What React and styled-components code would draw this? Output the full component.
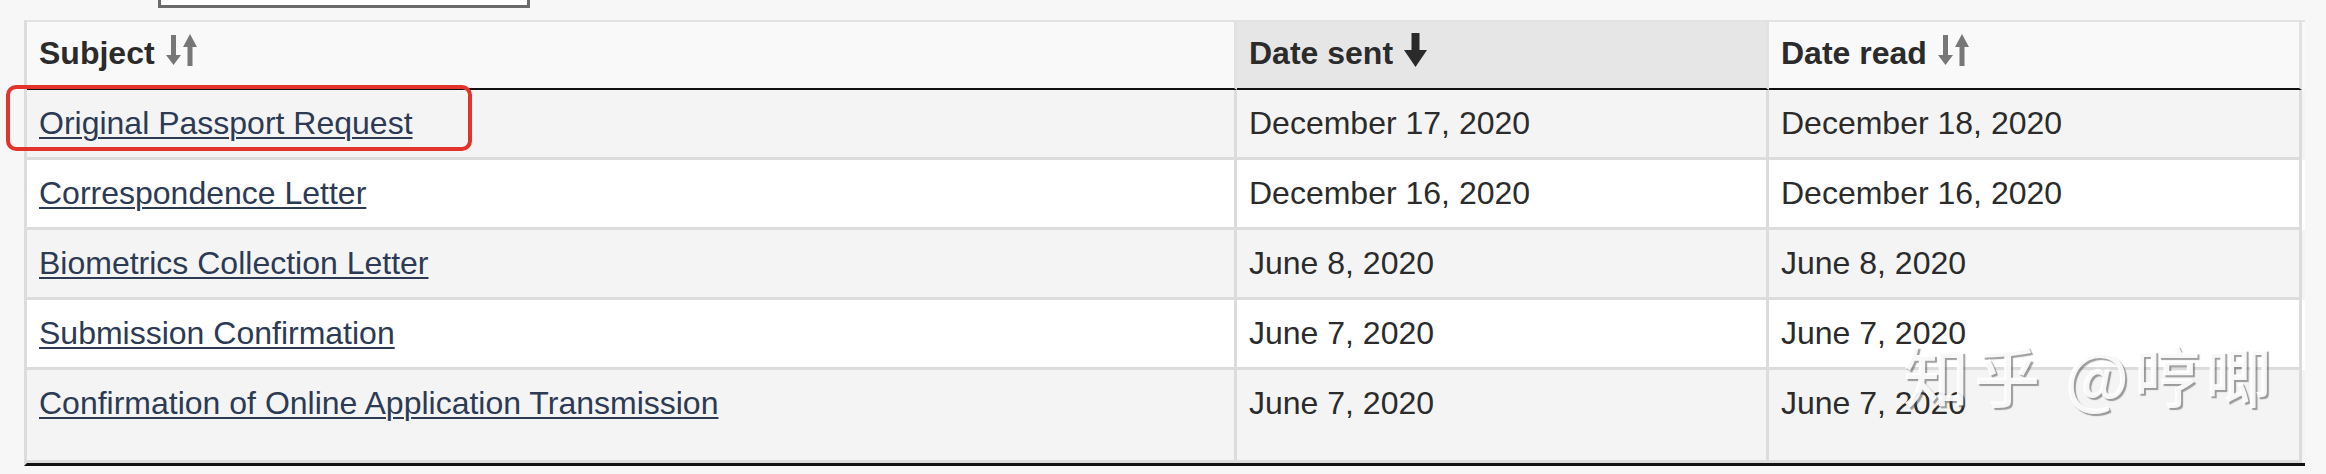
import React from 'react'
import styled, { createGlobalStyle } from 'styled-components'

const GlobalStyle = createGlobalStyle`
  html, body {
    margin: 0;
    padding: 0;
  }
  body {
    background: #f7f7f7;
    font-family: "Liberation Sans", Arial, Helvetica, sans-serif;
    color: #2b2b2b;
    overflow: hidden;
  }
`

const COLS = '1210px 532px 533px'

const messages = [
  { subject: 'Original Passport Request', sent: 'December 17, 2020', read: 'December 18, 2020' },
  { subject: 'Correspondence Letter', sent: 'December 16, 2020', read: 'December 16, 2020' },
  { subject: 'Biometrics Collection Letter', sent: 'June 8, 2020', read: 'June 8, 2020' },
  { subject: 'Submission Confirmation', sent: 'June 7, 2020', read: 'June 7, 2020' },
  { subject: 'Confirmation of Online Application Transmission', sent: 'June 7, 2020', read: 'June 7, 2020' },
]

function SortBoth() {
  return (
    <SortIcon width="31" height="32" viewBox="0 0 31 32">
      <rect x="5" y="1" width="5" height="22" fill="#777" />
      <polygon points="0,21 15,21 7.5,31" fill="#777" />
      <polygon points="17,13 31,13 24,0" fill="#777" />
      <rect x="21.5" y="12" width="5" height="20" fill="#777" />
    </SortIcon>
  )
}

function SortDown() {
  return (
    <SortIcon width="23" height="34" viewBox="0 0 23 34" style={{ marginTop: 0 }}>
      <rect x="7.5" y="0" width="8" height="19" fill="#2a2a2a" />
      <polygon points="0,17 23,17 11.5,34" fill="#2a2a2a" />
    </SortIcon>
  )
}

function App() {
  return (
    <Page>
      <GlobalStyle />
      <Toolbar>
        <SearchBox />
      </Toolbar>

      <Table>
        <Row $head>
          <HeadCell>
            <span>Subject</span>
            <SortBoth />
          </HeadCell>
          <HeadCell $active>
            <span>Date sent</span>
            <SortDown />
          </HeadCell>
          <HeadCell>
            <span>Date read</span>
            <SortBoth />
          </HeadCell>
        </Row>
        {messages.map((m, i) => (
          <Row key={m.subject} $striped={i % 2 === 0}>
            <Cell $last={i === messages.length - 1}>
              <SubjectLink href="#">{m.subject}</SubjectLink>
            </Cell>
            <Cell $last={i === messages.length - 1}>{m.sent}</Cell>
            <Cell $last={i === messages.length - 1}>{m.read}</Cell>
          </Row>
        ))}
      </Table>

      <Highlight />
      <Watermark>知乎 @哼唧</Watermark>
    </Page>
  )
}

const Page = styled.div`
  position: relative;
  width: 2326px;
  height: 474px;
  padding: 0 24px;
  box-sizing: border-box;
`

const Toolbar = styled.div`
  height: 8px;
  display: flex;
  align-items: flex-end;
  padding-left: 134px;
`

const SearchBox = styled.div`
  flex: none;
  width: 372px;
  height: 44px;
  box-sizing: border-box;
  background: #fff;
  border: 3px solid #6b6b6b;
`

const Table = styled.div`
  margin-top: 12px;
  width: 2278px;
  border-top: 2px solid #e2e2e2;
  border-left: 3px solid #dcdcdc;
  border-bottom: 3px solid #111;
`

const Row = styled.div`
  display: grid;
  grid-template-columns: ${COLS};
  background: ${p => (p.$head ? '#f9f9f9' : p.$striped ? '#f4f4f4' : '#ffffff')};
`

const HeadCell = styled.div`
  box-sizing: border-box;
  display: flex;
  align-items: flex-start;
  gap: 11px;
  padding: 11px 12px 15px;
  line-height: 40px;
  font-size: 32px;
  font-weight: 700;
  color: #2b2b2b;
  background: ${p => (p.$active ? '#e6e6e6' : '#f9f9f9')};
  border-right: 3px solid #e2e2e2;
  border-bottom: 2px solid #111;
`

const SortIcon = styled.svg`
  flex: none;
  margin-top: 1px;
`

const Cell = styled.div`
  box-sizing: border-box;
  padding: 13px 12px ${p => (p.$last ? '37px' : '14px')};
  line-height: 40px;
  font-size: 32px;
  color: #2b2b2b;
  border-right: 3px solid #dcdcdc;
  border-bottom: 3px solid #dcdcdc;
  white-space: nowrap;
`

const SubjectLink = styled.a`
  color: #2c3a54;
  text-decoration: underline;
  text-decoration-thickness: 2px;
  text-underline-offset: 3px;
`

const Highlight = styled.div`
  position: absolute;
  left: 6px;
  top: 85px;
  width: 466px;
  height: 66px;
  box-sizing: border-box;
  border: 4px solid #e2342b;
  border-radius: 10px;
  pointer-events: none;
`

const Watermark = styled.div`
  position: absolute;
  left: 1903px;
  top: 340px;
  font-family: "Noto Sans CJK SC", "Liberation Sans", sans-serif;
  font-size: 66px;
  line-height: 1;
  font-weight: 500;
  letter-spacing: 5px;
  white-space: nowrap;
  color: rgba(255, 255, 255, 0.92);
  text-shadow: 2px 2px 1px rgba(80, 80, 80, 0.55);
  pointer-events: none;
`

export default App
